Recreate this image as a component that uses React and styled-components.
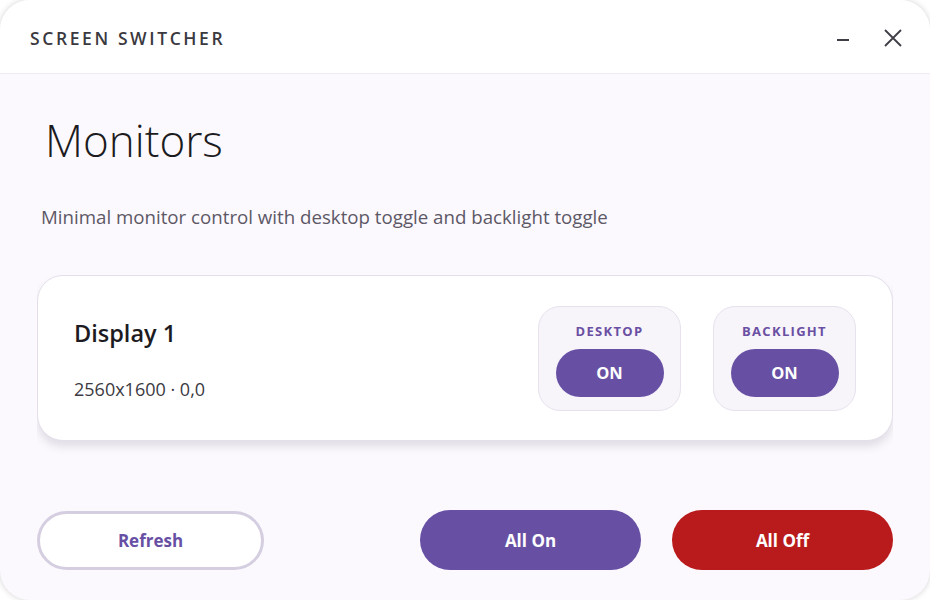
import React from "react";
import styled, { createGlobalStyle } from "styled-components";

const Global = createGlobalStyle`
  html, body {
    margin: 0;
    padding: 0;
    background: #ffffff;
  }
  body {
    font-family: "Open Sans", "Noto Sans", sans-serif;
  }
`;

const Window = styled.div`
  width: 930px;
  height: 600px;
  box-sizing: border-box;
  border-radius: 30px;
  overflow: hidden;
  background: #fcf9fe;
  box-shadow: 0 0 6px rgba(0, 0, 0, 0.18);
  display: flex;
  flex-direction: column;
`;

const TitleBar = styled.header`
  height: 74px;
  flex: none;
  box-sizing: border-box;
  background: #ffffff;
  border-bottom: 1px solid #efeaf3;
  display: flex;
  align-items: center;
  justify-content: space-between;
  padding: 0 24px 0 30px;
`;

const AppName = styled.div`
  font-size: 17.5px;
  font-weight: 600;
  letter-spacing: 2.6px;
  color: #3b3940;
  margin-top: 3px;
`;

const WinControls = styled.div`
  display: flex;
  align-items: center;
  gap: 24px;
  margin-top: 3px;
`;

const WinButton = styled.button`
  border: 0;
  background: none;
  padding: 0;
  width: 26px;
  height: 26px;
  display: flex;
  align-items: center;
  justify-content: center;
  color: #3f3d45;
  cursor: pointer;
`;

const Content = styled.main`
  flex: 1;
  display: flex;
  flex-direction: column;
  padding: 0 37px;
`;

const Heading = styled.h1`
  margin: 36px 0 0 8px;
  font-size: 44px;
  font-weight: 300;
  line-height: 60px;
  color: #1c1b20;
`;

const Subtitle = styled.p`
  margin: 34px 0 0 4px;
  font-size: 18.7px;
  line-height: 26px;
  color: #5d5866;
`;

const CardClip = styled.div`
  margin-top: 45px;
  padding-bottom: 14px;
  overflow-x: hidden;
`;

const Card = styled.section`
  box-sizing: border-box;
  height: 166px;
  background: #ffffff;
  border: 1px solid #e4dfea;
  border-radius: 26px;
  box-shadow: 0 6px 8px rgba(40, 30, 60, 0.12);
  display: flex;
  align-items: center;
  justify-content: space-between;
  padding: 0 36px 0 36px;
`;

const Info = styled.div`
  display: flex;
  flex-direction: column;
  gap: 28px;
  margin-top: 2px;
`;

const DisplayName = styled.div`
  font-size: 23.5px;
  font-weight: 600;
  color: #1d1b22;
`;

const DisplayMeta = styled.div`
  font-size: 18px;
  color: #3c3a42;
`;

const Toggles = styled.div`
  display: flex;
  gap: 32px;
`;

const ToggleBox = styled.div`
  box-sizing: border-box;
  width: 143px;
  height: 105px;
  border-radius: 22px;
  background: #f7f4fa;
  border: 1px solid #e7e2ed;
  display: flex;
  flex-direction: column;
  align-items: center;
  padding-top: 15px;
  gap: 9px;
`;

const ToggleLabel = styled.div`
  font-size: 13px;
  font-weight: 700;
  letter-spacing: 1.3px;
  color: #6a4fa3;
`;

const Pill = styled.button`
  width: 108px;
  height: 48px;
  border: 0;
  border-radius: 24px;
  background: ${(p) => (p.on ? "#6750a4" : "#e7e2ed")};
  color: ${(p) => (p.on ? "#ffffff" : "#6750a4")};
  font-family: inherit;
  font-size: 16.5px;
  font-weight: 700;
  cursor: pointer;
`;

const Footer = styled.footer`
  margin-top: auto;
  margin-bottom: 30px;
  display: flex;
  align-items: center;
`;

const ActionButton = styled.button`
  box-sizing: border-box;
  width: ${(p) => p.width || "221px"};
  height: ${(p) => (p.variant === "outline" ? "59px" : "60px")};
  border-radius: 30px;
  font-family: inherit;
  font-size: 17px;
  font-weight: 700;
  cursor: pointer;
  border: ${(p) => (p.variant === "outline" ? "3px solid #d5cee0" : "0")};
  background: ${(p) =>
    p.variant === "outline" ? "#ffffff" : p.variant === "danger" ? "#b91a1c" : "#6750a4"};
  color: ${(p) => (p.variant === "outline" ? "#6750a4" : "#ffffff")};
  margin-left: ${(p) => p.gap || "0"};
`;

const displays = [
  { name: "Display 1", res: "2560x1600", pos: "0,0", desktop: true, backlight: true },
];

export default function App() {
  return (
    <>
      <Global />
      <Window>
        <TitleBar>
          <AppName>SCREEN SWITCHER</AppName>
          <WinControls>
            <WinButton aria-label="Minimize">
              <svg width="14" height="14" viewBox="0 0 14 14">
                <line x1="1" y1="9" x2="13" y2="9" stroke="currentColor" strokeWidth="2" />
              </svg>
            </WinButton>
            <WinButton aria-label="Close">
              <svg width="20" height="20" viewBox="0 0 20 20">
                <path d="M2 2 L18 18 M18 2 L2 18" stroke="currentColor" strokeWidth="1.8" fill="none" />
              </svg>
            </WinButton>
          </WinControls>
        </TitleBar>
        <Content>
          <Heading>Monitors</Heading>
          <Subtitle>Minimal monitor control with desktop toggle and backlight toggle</Subtitle>
          {displays.map((d) => (
            <CardClip key={d.name}>
              <Card>
                <Info>
                  <DisplayName>{d.name}</DisplayName>
                  <DisplayMeta>
                    {d.res} · {d.pos}
                  </DisplayMeta>
                </Info>
                <Toggles>
                  <ToggleBox>
                    <ToggleLabel>DESKTOP</ToggleLabel>
                    <Pill on={d.desktop}>{d.desktop ? "ON" : "OFF"}</Pill>
                  </ToggleBox>
                  <ToggleBox>
                    <ToggleLabel>BACKLIGHT</ToggleLabel>
                    <Pill on={d.backlight}>{d.backlight ? "ON" : "OFF"}</Pill>
                  </ToggleBox>
                </Toggles>
              </Card>
            </CardClip>
          ))}
          <Footer>
            <ActionButton variant="outline" width="227px">Refresh</ActionButton>
            <ActionButton gap="156px">All On</ActionButton>
            <ActionButton variant="danger" gap="31px">All Off</ActionButton>
          </Footer>
        </Content>
      </Window>
    </>
  );
}
